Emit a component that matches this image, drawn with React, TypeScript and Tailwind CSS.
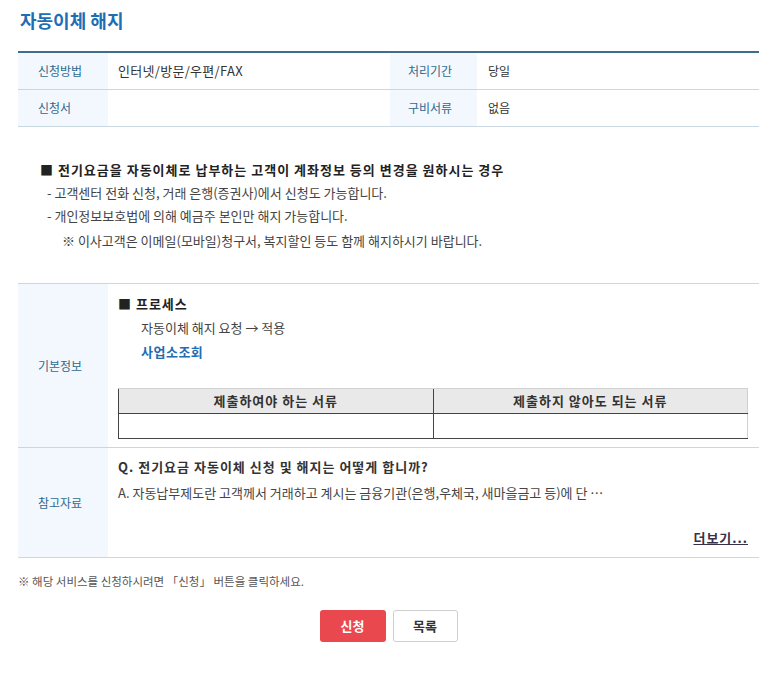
import React from 'react'

const font = { fontFamily: '"Noto Sans CJK KR", "Noto Sans", sans-serif' }

function Label({ children, pad = 'pl-[20px]' }: { children: React.ReactNode; pad?: string }) {
  return (
    <div className={`flex items-center bg-[#f2f8fd] text-[12px] text-[#2f6a8f] ${pad}`}>
      {children}
    </div>
  )
}

export default function App() {
  return (
    <div className="w-[759px] min-h-[674px] bg-white text-[#333] pl-[18px]" style={font}>
      {/* Title */}
      <h1 className="pt-[8px] pl-[2px] text-[18px] leading-[24px] font-bold text-[#1f6db3]">
        자동이체 해지
      </h1>

      {/* Summary table */}
      <div className="mt-[19px] border-t-2 border-[#3d6f8d]">
        <div className="grid grid-cols-[90px_282px_87px_1fr] h-[37px] border-b border-[#c9d7e1]">
          <Label>신청방법</Label>
          <div className="flex items-center pl-[10px] text-[13px] tracking-[0.3px]">인터넷/방문/우편/FAX</div>
          <Label pad="pl-[18px]">처리기간</Label>
          <div className="flex items-center pl-[11px] text-[12px]">당일</div>
        </div>
        <div className="grid grid-cols-[90px_282px_87px_1fr] h-[37px] border-b border-[#c9d7e1]">
          <Label>신청서</Label>
          <div className="flex items-center pl-[10px] text-[12px]"></div>
          <Label pad="pl-[18px]">구비서류</Label>
          <div className="flex items-center pl-[11px] text-[12px]">없음</div>
        </div>
      </div>

      {/* Notice */}
      <div className="pt-[31px] pb-[31px] pl-[22px] text-[13px] leading-[23px]">
        <p className="font-bold tracking-[1px] text-[#222]">■ 전기요금을 자동이체로 납부하는 고객이 계좌정보 등의 변경을 원하시는 경우</p>
        <p className="pl-[7px] text-[#444]">- 고객센터 전화 신청, 거래 은행(증권사)에서 신청도 가능합니다.</p>
        <p className="pl-[7px] text-[#444]">- 개인정보보호법에 의해 예금주 본인만 해지 가능합니다.</p>
        <p className="pl-[22px] pt-[2px] text-[#444]">※ 이사고객은 이메일(모바일)청구서, 복지할인 등도 함께 해지하시기 바랍니다.</p>
      </div>

      {/* Detail table */}
      <div className="border-t border-[#c9d7e1]">
        <div className="grid grid-cols-[90px_1fr] border-b border-[#c9d7e1]">
          <Label>기본정보</Label>
          <div className="pl-[10px] pr-[11px] pt-[8px] pb-[8px] text-[13px] leading-[24px]">
            <p className="font-bold tracking-[1px] text-[#222]">■ 프로세스</p>
            <p className="pl-[23px] text-[#444]">자동이체 해지 요청 → 적용</p>
            <p className="pl-[23px] font-bold tracking-[0.5px] text-[#1f6db3]">사업소조회</p>
            <table className="mt-[24px] w-full border-collapse text-[13px]">
              <thead>
                <tr className="bg-[#e9e9e9]">
                  <th className="w-1/2 h-[25px] border-t border-t-[#d0d0d0] border-l border-l-[#444] border-b border-b-[#444] font-bold tracking-[1px] text-[#333]">
                    제출하여야 하는 서류
                  </th>
                  <th className="w-1/2 h-[25px] border-t border-t-[#d0d0d0] border-l border-l-[#444] border-r border-r-[#d0d0d0] border-b border-b-[#444] font-bold tracking-[1px] text-[#333]">
                    제출하지 않아도 되는 서류
                  </th>
                </tr>
              </thead>
              <tbody>
                <tr>
                  <td className="h-[25px] border-l border-l-[#444] border-b border-b-[#444]"></td>
                  <td className="h-[25px] border-l border-l-[#444] border-b border-b-[#444] border-r border-r-[#d0d0d0]"></td>
                </tr>
              </tbody>
            </table>
          </div>
        </div>

        <div className="grid grid-cols-[90px_1fr] h-[110px] border-b border-[#c9d7e1]">
          <Label>참고자료</Label>
          <div className="flex flex-col pl-[10px] pr-[11px] pt-[7px] pb-[9px] text-[13px]">
            <p className="leading-[24px] font-bold tracking-[1px] text-[#333]">Q. 전기요금 자동이체 신청 및 해지는 어떻게 합니까?</p>
            <p className="leading-[24px] pt-[2px] text-[#444]">A. 자동납부제도란 고객께서 거래하고 계시는 금융기관(은행,우체국, 새마을금고 등)에 단 …</p>
            <div className="mt-auto text-right leading-[20px]">
              <a href="#" className="font-bold tracking-[1px] underline text-[#3b3049]">더보기...</a>
            </div>
          </div>
        </div>
      </div>

      {/* Footer note */}
      <p className="mt-[15px] text-[11.5px] leading-[16px] text-[#555]">
        ※ 해당 서비스를 신청하시려면 「신청」 버튼을 클릭하세요.
      </p>

      {/* Buttons */}
      <div className="mt-[21px] flex justify-center gap-[7px]">
        <button className="w-[66px] h-[32px] rounded-[3px] bg-[#e9484f] text-white text-[13px] font-bold">
          신청
        </button>
        <button className="w-[65px] h-[32px] rounded-[3px] border border-[#cfcfcf] bg-white text-[#333] text-[13px] font-bold">
          목록
        </button>
      </div>
    </div>
  )
}
